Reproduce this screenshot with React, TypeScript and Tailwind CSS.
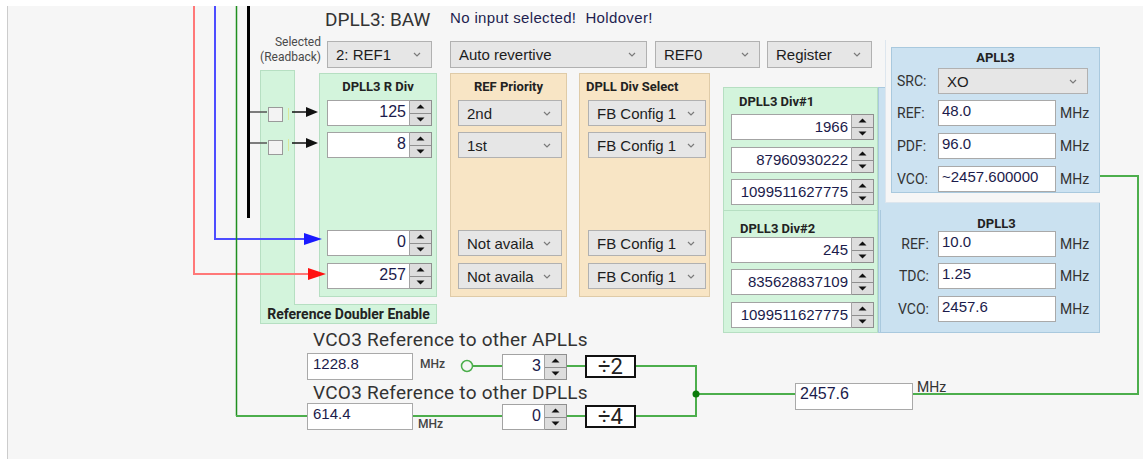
import React from "react";

const Chev = () => (
  <svg width="8" height="5" viewBox="0 0 8 5" className="shrink-0">
    <polyline points="1,1 4,4 7,1" fill="none" stroke="#7a7a7a" strokeWidth="1.2" />
  </svg>
);

function Sel({ label, className = "" }: { label: string; className?: string }) {
  return (
    <div
      className={`flex items-center justify-between overflow-hidden border border-[#b1b1b1] bg-[#e6e6e6] pl-[8px] pr-[10px] text-[15px] leading-none text-[#1d1d1d] font-['Liberation_Sans',Arial,sans-serif] ${className}`}
    >
      <span className="whitespace-nowrap">{label}</span>
      <Chev />
    </div>
  );
}

const Tri = ({ up }: { up?: boolean }) => (
  <svg width="9" height="5" viewBox="0 0 9 5">
    <polygon points={up ? "0.5,4.5 4.5,0.5 8.5,4.5" : "0.5,0.5 8.5,0.5 4.5,4.5"} fill="#111" />
  </svg>
);

function Spin({ value, className = "", text = "text-[16px]" }: { value: string; className?: string; text?: string }) {
  return (
    <div className={`flex ${className}`}>
      <div
        className={`flex flex-1 items-center justify-end overflow-hidden border border-[#a3a3a3] bg-white pr-[3px] pb-[2px] leading-none text-[#1b1b4b] font-['Liberation_Sans',Arial,sans-serif] ${text}`}
      >
        {value}
      </div>
      <div className="flex w-[22px] flex-col border border-l-0 border-[#8f8f8f]">
        <div className="flex flex-1 items-center justify-center border-b border-[#8f8f8f] bg-[#dddddd]">
          <Tri up />
        </div>
        <div className="flex flex-1 items-center justify-center bg-[#dddddd]">
          <Tri />
        </div>
      </div>
    </div>
  );
}

function Field({ value, className = "", text = "text-[15px]" }: { value: string; className?: string; text?: string }) {
  return (
    <div
      className={`border border-[#a9a9a9] bg-white pl-[3px] pt-[1px] leading-[17px] text-[#1b1b4b] font-['Liberation_Sans',Arial,sans-serif] ${text} ${className}`}
    >
      {value}
    </div>
  );
}

const Title = ({ children, className = "" }: { children: React.ReactNode; className?: string }) => (
  <div className={`text-[13px] font-bold leading-[16px] text-[#222] font-['Roboto',sans-serif] ${className}`}>{children}</div>
);

function Row({ label, value, labelCls }: { label: string; value: string; labelCls: string }) {
  return (
    <div className="flex h-[26px] items-center">
      <div className={`text-[14px] text-[#333] font-['Roboto',sans-serif] ${labelCls}`}>{label}</div>
      <Field value={value} className="h-[26px] w-[118px]" />
      <div className="ml-[4px] text-[14px] text-[#333] font-['Roboto',sans-serif]">MHz</div>
    </div>
  );
}

export default function App() {
  const g = "#4cae4c";
  return (
    <div className="h-[459px] w-[1143px] overflow-hidden bg-white pl-[7px] pt-[6px]">
      <div className="relative h-[453px] w-[1136px] border-l border-[#cccccc] bg-[#f6f6f6] font-['Roboto',sans-serif]">
        {/* header texts */}
        <div className="absolute left-[317px] top-[3px] text-[19px] leading-[22px] text-[#333]">DPLL3: BAW</div>
        <div className="absolute left-[442px] top-[3px] whitespace-pre text-[15px] leading-[18px] tracking-[0.35px] text-[#1e1e50] font-['Liberation_Sans',Arial,sans-serif]">
          No input selected!  Holdover!
        </div>
        <div className="absolute left-[242px] top-[29px] w-[71px] text-right text-[12px] leading-[15px] text-[#4a4a4a]">
          <div>Selected</div>
          <div>(Readback)</div>
        </div>

        {/* top selects */}
        <Sel label="2: REF1" className="absolute left-[319px] top-[35px] h-[27px] w-[105px]" />
        <Sel label="Auto revertive" className="absolute left-[442px] top-[35px] h-[27px] w-[197px]" />
        <Sel label="REF0" className="absolute left-[647px] top-[35px] h-[27px] w-[105px]" />
        <Sel label="Register" className="absolute left-[759px] top-[35px] h-[27px] w-[105px]" />

        {/* reference doubler column + strip */}
        <div className="absolute left-[252px] top-[298px] flex h-[20px] w-[177px] items-center justify-center border border-[#b6dfc2] bg-[#d3f4dc] text-[14px] font-bold text-[#222]">
          Reference Doubler Enable
        </div>
        <div className="absolute left-[252px] top-[64px] h-[235px] w-[35px] border-l border-r border-t border-[#b6dfc2] bg-[#d3f4dc]" />
        <div className="absolute left-[260px] top-[101px] h-[15px] w-[15px] border border-[#9a9a9a] bg-[#f3f3f3]" />
        <div className="absolute left-[260px] top-[134px] h-[15px] w-[15px] border border-[#9a9a9a] bg-[#f3f3f3]" />

        {/* DPLL3 R Div */}
        <div className="absolute left-[311px] top-[67px] flex h-[224px] w-[118px] flex-col border border-[#b6dfc2] bg-[#d3f4dc] pt-[5px]">
          <Title className="text-center">DPLL3 R Div</Title>
          <Spin value="125" className="ml-[7px] mt-[5px] h-[26px] w-[105px]" />
          <Spin value="8" className="ml-[7px] mt-[6px] h-[26px] w-[105px]" />
          <Spin value="0" className="ml-[7px] mt-[72px] h-[26px] w-[105px]" />
          <Spin value="257" className="ml-[7px] mt-[7px] h-[26px] w-[105px]" />
        </div>

        {/* REF Priority */}
        <div className="absolute left-[442px] top-[67px] flex h-[224px] w-[117px] flex-col border border-[#dfcba8] bg-[#f8e5c5] pt-[5px]">
          <Title className="text-center">REF Priority</Title>
          <Sel label="2nd" className="ml-[7px] mt-[5px] h-[26px] w-[104px]" />
          <Sel label="1st" className="ml-[7px] mt-[6px] h-[26px] w-[104px]" />
          <Sel label="Not availa" className="ml-[7px] mt-[72px] h-[26px] w-[104px]" />
          <Sel label="Not availa" className="ml-[7px] mt-[7px] h-[26px] w-[104px]" />
        </div>

        {/* DPLL Div Select */}
        <div className="absolute left-[571px] top-[67px] flex h-[224px] w-[131px] flex-col border border-[#dfcba8] bg-[#f8e5c5] pt-[5px]">
          <Title className="pl-[6px]">DPLL Div Select</Title>
          <Sel label="FB Config 1" className="ml-[8px] mt-[5px] h-[26px] w-[118px]" />
          <Sel label="FB Config 1" className="ml-[8px] mt-[6px] h-[26px] w-[118px]" />
          <Sel label="FB Config 1" className="ml-[8px] mt-[72px] h-[26px] w-[118px]" />
          <Sel label="FB Config 1" className="ml-[8px] mt-[7px] h-[26px] w-[118px]" />
        </div>

        {/* DPLL3 Div#1 / Div#2 */}
        <div className="absolute left-[715px] top-[81px] flex h-[246px] w-[155px] flex-col border border-[#b6dfc2] bg-[#d3f4dc]">
          <div className="flex h-[123px] flex-col border-b border-[#b6dfc2] pt-[6px]">
            <Title className="pl-[15px]">DPLL3 Div#1</Title>
            <Spin value="1966" text="text-[15px]" className="ml-[7px] mt-[4px] h-[26px] w-[143px]" />
            <Spin value="87960930222" text="text-[15px]" className="ml-[7px] mt-[7px] h-[26px] w-[143px]" />
            <Spin value="1099511627775" text="text-[15px]" className="ml-[7px] mt-[6px] h-[26px] w-[143px]" />
          </div>
          <div className="flex flex-col pt-[10px]">
            <Title className="pl-[16px]">DPLL3 Div#2</Title>
            <Spin value="245" text="text-[15px]" className="ml-[7px] h-[26px] w-[143px]" />
            <Spin value="835628837109" text="text-[15px]" className="ml-[7px] mt-[6px] h-[26px] w-[143px]" />
            <Spin value="1099511627775" text="text-[15px]" className="ml-[7px] mt-[7px] h-[26px] w-[143px]" />
          </div>
        </div>

        {/* blue back + DPLL3 */}
        <div className="absolute left-[870px] top-[81px] h-[246px] w-[222px] border border-[#a9c9de] bg-[#cae1f0]" />
        <div className="absolute left-[877px] top-[34px] h-[163px] w-[215px] border-b border-l border-[#dde6ee] bg-[#f6f6f6]" />
        <div className="absolute left-[872px] top-[204px] flex h-[123px] w-[220px] flex-col border-l border-[#a9c9de] pt-[7px]">
          <div className="ml-[12px] text-center text-[13px] font-bold leading-[14px] text-[#222]">DPLL3</div>
          <Row label="REF:" value="10.0" labelCls="w-[48px] mr-[9px] text-right" />
          <div className="mt-[6px]">
            <Row label="TDC:" value="1.25" labelCls="w-[48px] mr-[9px] text-right" />
          </div>
          <div className="mt-[7px]">
            <Row label="VCO:" value="2457.6" labelCls="w-[48px] mr-[9px] text-right" />
          </div>
        </div>

        {/* APLL3 */}
        <div className="absolute left-[883px] top-[41px] flex h-[146px] w-[209px] flex-col border border-[#a9c9de] bg-[#cce2f1] pl-[5px] pt-[2px]">
          <Title className="pr-[5px] text-center">APLL3</Title>
          <div className="mt-[2px] flex h-[26px] items-center">
            <div className="w-[41px] text-[14px] text-[#333]">SRC:</div>
            <Sel label="XO" className="h-[26px] w-[150px]" />
          </div>
          <div className="mt-[6px]">
            <Row label="REF:" value="48.0" labelCls="w-[41px]" />
          </div>
          <div className="mt-[7px]">
            <Row label="PDF:" value="96.0" labelCls="w-[41px]" />
          </div>
          <div className="mt-[7px]">
            <Row label="VCO:" value="~2457.600000" labelCls="w-[41px]" />
          </div>
        </div>

        {/* bottom section */}
        <div className="absolute left-[305px] top-[323px] text-[19px] leading-[22px] tracking-[0.25px] text-[#333]">VCO3 Reference to other APLLs</div>
        <Field value="1228.8" className="absolute left-[299px] top-[347px] h-[27px] w-[106px] pl-[5px]" />
        <div className="absolute left-[412px] top-[351px] text-[12px] font-medium leading-[14px] text-[#444]">MHz</div>
        <Spin value="3" className="absolute left-[494px] top-[348px] h-[26px] w-[65px]" />
        <div className="absolute left-[577px] top-[349px] flex h-[23px] w-[51px] items-center justify-center border-2 border-[#111] bg-white text-[22px] leading-none text-[#222]">
          ÷2
        </div>

        <div className="absolute left-[305px] top-[376px] text-[19px] leading-[22px] tracking-[0.25px] text-[#333]">VCO3 Reference to other DPLLs</div>
        <Field value="614.4" className="absolute left-[299px] top-[397px] h-[27px] w-[106px] pl-[5px]" />
        <div className="absolute left-[410px] top-[411px] text-[12px] font-medium leading-[14px] text-[#444]">MHz</div>
        <Spin value="0" className="absolute left-[494px] top-[398px] h-[26px] w-[65px]" />
        <div className="absolute left-[577px] top-[399px] flex h-[23px] w-[51px] items-center justify-center border-2 border-[#111] bg-white text-[22px] leading-none text-[#222]">
          ÷4
        </div>

        <Field value="2457.6" text="text-[16px]" className="absolute left-[787px] top-[377px] h-[27px] w-[118px] pl-[4px]" />
        <div className="absolute left-[909px] top-[373px] text-[14px] leading-[16px] text-[#333]">MHz</div>

        {/* wires */}
        <svg className="pointer-events-none absolute left-0 top-0" width="1135" height="453" viewBox="8 6 1135 453">
          <polyline points="194,6 194,274 312,274" fill="none" stroke="#ff7878" strokeWidth="2" />
          <polygon points="308,268 326,274 308,280" fill="#ff1010" />
          <polyline points="215,6 215,239 308,239" fill="none" stroke="#4d4dff" strokeWidth="2" />
          <polygon points="304,233 322,239 304,245" fill="#1a1aff" />
          <line x1="236.5" y1="6" x2="236.5" y2="416" stroke="#1f8f1f" strokeWidth="1.5" />
          <line x1="236" y1="416" x2="307" y2="416" stroke={g} strokeWidth="2" />
          <line x1="248.5" y1="6" x2="248.5" y2="218" stroke="#000" strokeWidth="3" />
          <line x1="250" y1="112" x2="267" y2="112" stroke="#555" strokeWidth="1.5" />
          <line x1="250" y1="143" x2="267" y2="143" stroke="#555" strokeWidth="1.5" />
          <line x1="288.5" y1="108" x2="288.5" y2="120" stroke="#dbe69a" strokeWidth="1" />
          <line x1="288.5" y1="139" x2="288.5" y2="151" stroke="#dbe69a" strokeWidth="1" />
          <line x1="292" y1="112" x2="308" y2="112" stroke="#111" strokeWidth="1.5" />
          <polygon points="306,107 318,112 306,117" fill="#111" />
          <line x1="292" y1="143" x2="308" y2="143" stroke="#111" strokeWidth="1.5" />
          <polygon points="306,138 318,143 306,148" fill="#111" />
          <circle cx="467" cy="366" r="5.5" fill="#f6f6f6" stroke={g} strokeWidth="1.5" />
          <line x1="473" y1="366" x2="502" y2="366" stroke={g} strokeWidth="2" />
          <line x1="567" y1="366" x2="585" y2="366" stroke={g} strokeWidth="2" />
          <polyline points="636,366 696,366 696,416 636,416" fill="none" stroke={g} strokeWidth="2" />
          <line x1="413" y1="416" x2="502" y2="416" stroke={g} strokeWidth="2" />
          <line x1="567" y1="416" x2="585" y2="416" stroke={g} strokeWidth="2" />
          <line x1="696" y1="394" x2="795" y2="394" stroke={g} strokeWidth="2" />
          <polyline points="913,394 1138,394 1138,176 1100,176" fill="none" stroke={g} strokeWidth="2" />
          <circle cx="696" cy="394" r="3.5" fill="#0b7a0b" />
        </svg>
      </div>
    </div>
  );
}
